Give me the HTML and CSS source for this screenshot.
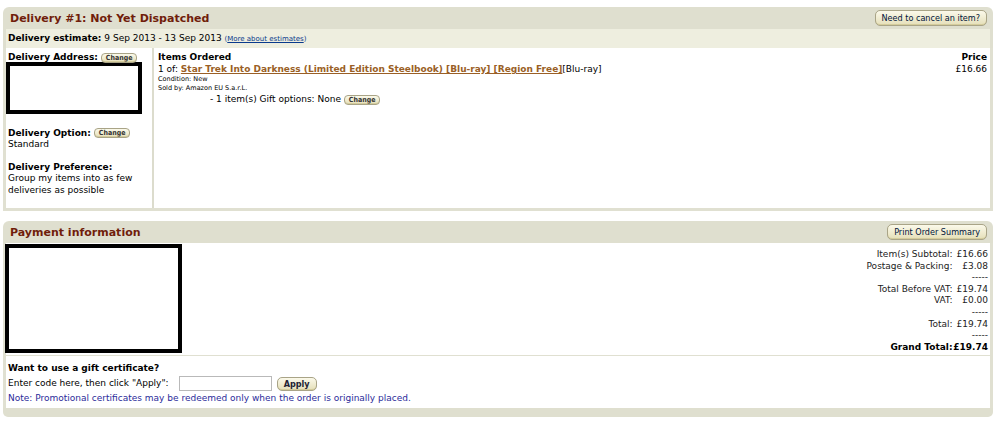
FILE: index.html
```html
<!DOCTYPE html>
<html>
<head>
<meta charset="utf-8">
<link rel="stylesheet" href="styles.css">
</head>
<body>
<div class="page">
  <section class="box">
    <div class="box-head">
      <h2 class="box-title">Delivery #1: Not Yet Dispatched</h2>
      <span class="btn">Need to cancel an item?</span>
    </div>
    <div class="estimate"><b>Delivery estimate:</b> 9 Sep 2013 - 13 Sep 2013 <a class="tiny-link" href="#">(<u>More about estimates</u>)</a></div>
    <div class="box-body delivery">
      <div class="side">
        <div class="label-row"><b>Delivery Address:</b> <span class="btn btn-sm">Change</span></div>
        <div class="redact redact-addr"></div>
        <div class="side-block first">
          <div class="label-row"><b>Delivery Option:</b> <span class="btn btn-sm">Change</span></div>
          <div>Standard</div>
        </div>
        <div class="side-block">
          <div><b>Delivery Preference:</b></div>
          <div>Group my items into as few deliveries as possible</div>
        </div>
      </div>
      <div class="main">
        <div class="items-head"><b>Items Ordered</b><b>Price</b></div>
        <div class="item-row">
          <div>1 of: <a class="prod" href="#">Star Trek Into Darkness (Limited Edition Steelbook) [Blu-ray] [Region Free]</a>[Blu-ray]</div>
          <div>£16.66</div>
        </div>
        <div class="tiny">Condition: New</div>
        <div class="tiny">Sold by: Amazon EU S.a.r.L.</div>
        <div class="gift-opt">- 1 item(s) Gift options: None <span class="btn btn-sm">Change</span></div>
      </div>
    </div>
  </section>

  <section class="box box2">
    <div class="box-head">
      <h2 class="box-title">Payment information</h2>
      <span class="btn">Print Order Summary</span>
    </div>
    <div class="box-body payment">
      <div class="redact redact-pay"></div>
      <table class="totals">
        <tr><td>Item(s) Subtotal:</td><td>£16.66</td></tr>
        <tr><td>Postage &amp; Packing:</td><td>£3.08</td></tr>
        <tr><td></td><td>-----</td></tr>
        <tr><td>Total Before VAT:</td><td>£19.74</td></tr>
        <tr><td>VAT:</td><td>£0.00</td></tr>
        <tr><td></td><td>-----</td></tr>
        <tr><td>Total:</td><td>£19.74</td></tr>
        <tr><td></td><td>-----</td></tr>
        <tr class="grand"><td>Grand Total:</td><td>£19.74</td></tr>
      </table>
    </div>
    <div class="box-body gift">
      <div><b>Want to use a gift certificate?</b></div>
      <div class="gift-row">Enter code here, then click "Apply": <input class="code" type="text"> <span class="btn btn-apply">Apply</span></div>
      <div class="note">Note: Promotional certificates may be redeemed only when the order is originally placed.</div>
    </div>
    <div class="box-foot"></div>
  </section>
</div>
</body>
</html>
```

FILE: styles.css
```css
* { box-sizing: border-box; }
body {
  margin: 0;
  background: #fff;
  font-family: "DejaVu Sans", Verdana, sans-serif;
  font-size: 9px;
  color: #000;
}
.page { padding: 7px 7px 0 3px; }
.box { margin-bottom: 10px; }
.box-head {
  background: #dfdfcf;
  border-radius: 6px 6px 0 0;
  height: 22px;
  display: flex;
  align-items: center;
  justify-content: space-between;
  padding: 0 6px 0 7px;
}
.box-title {
  margin: 0;
  font-size: 11px;
  font-weight: bold;
  color: #701d0b;
}
.btn {
  display: inline-block;
  font-family: "DejaVu Sans Condensed", "DejaVu Sans", sans-serif;
  font-stretch: condensed;
  font-size: 9px;
  color: #00133a;
  background: linear-gradient(#fbf9ea, #e5dfb9);
  border: 1px solid #a9a487;
  border-radius: 5px;
  padding: 1px 6px;
  line-height: 12px;
  box-shadow: inset 0 -1px 0 #d4cc9c;
}
.btn-sm {
  font-size: 7px;
  font-weight: bold;
  line-height: 8px;
  padding: 0 4px;
  border-radius: 4px;
  color: #333;
}
.estimate {
  background: #eeeedf;
  height: 19px;
  line-height: 19px;
  padding: 0 2px;
  border-left: 3px solid #dfdfcf;
  border-right: 3px solid #dfdfcf;
}
.tiny-link { font-size: 7px; color: #0a3a8c; text-decoration: none; }
.box-body {
  border-left: 3px solid #e0e0d1;
  border-right: 3px solid #e0e0d1;
  background: #fff;
}
.delivery {
  display: flex;
  border-bottom: 3px solid #e0e0d1;
  height: 163px;
}
.side {
  width: 148px;
  padding: 4px 3px 4px 2px;
  border-right: 2px solid #dcdccd;
  line-height: 11.5px;
}
.label-row { display: flex; align-items: center; gap: 3px; }
.redact { border: 4px solid #000; background: #fff; }
.redact-addr { width: 136px; height: 52px; margin: -2px 0 0 -2px; }
.side-block { margin-top: 11px; }
.side-block.first { margin-top: 14px; }
.main {
  flex: 1;
  padding: 3px 3px 0 4px;
}
.items-head { display: flex; justify-content: space-between; line-height: 12px; }
.item-row { display: flex; justify-content: space-between; line-height: 12px; }
.prod { color: #9a5f26; font-weight: bold; }
.tiny { font-size: 6.5px; line-height: 9px; }
.gift-opt { padding-left: 52px; margin-top: 1px; }
.payment {
  display: flex;
  justify-content: space-between;
  align-items: flex-start;
  height: 113px;
  padding: 1px 2px 0 0;
  border-bottom: 1px solid #e0e0d1;
}
.redact-pay { width: 177px; height: 109px; margin-left: -1px; }
.totals { border-collapse: collapse; line-height: 11.6px; margin-top: 5px; }
.totals td { padding: 0; text-align: right; color: #222; }
.totals td + td { padding-left: 4px; }
.totals .grand td { font-weight: bold; color: #000; padding-left: 0; }
.gift { padding: 6px 5px 3px 2px; line-height: 13.5px; }
.gift-row { display: flex; align-items: center; height: 16px; }
.code { width: 93px; height: 15px; border: 1px solid #b9b9b9; margin: 0 5px 0 10px; padding: 0; }
.btn-apply { font-weight: bold; font-size: 9px; padding: 0 6px; color: #223; }
.note { color: #2b2b9a; }
.box-foot { height: 9px; background: #dfdfcf; border-radius: 0 0 5px 5px; }
```
